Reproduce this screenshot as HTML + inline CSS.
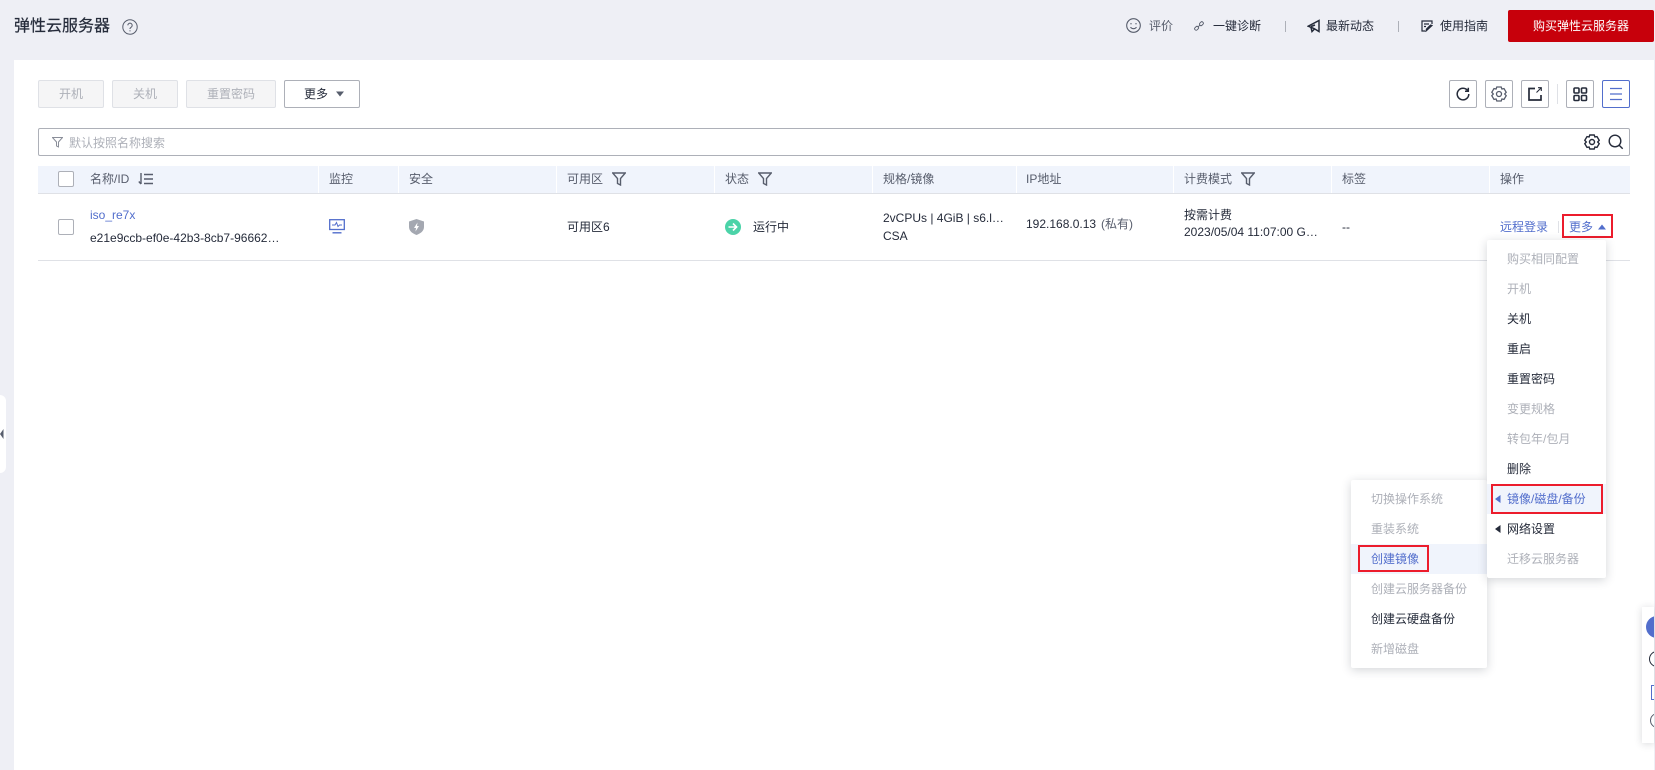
<!DOCTYPE html>
<html lang="zh"><head><meta charset="utf-8"><title>弹性云服务器</title>
<style>
html,body{margin:0;padding:0}
body{width:1655px;height:770px;position:relative;overflow:hidden;background:#eeeff5;font:12px/18px "Liberation Sans","Noto Sans CJK SC",sans-serif;color:#252b3a}
.a,.t,svg{position:absolute}
.t{white-space:nowrap;line-height:18px}
.b{position:absolute;box-sizing:border-box;height:28px;top:80px;border:1px solid #adb0b8;border-radius:2px;background:#fff;text-align:center;line-height:26px}
.d{background:#f5f5f6;border-color:#dfe1e6;color:#adb0b8}
.g{color:#575d6c}
.dis{color:#adb0b8}
.l{color:#526ecc}
.sep{position:absolute;top:166px;width:1px;height:27px;background:#fff}
.menu{position:absolute;background:#fff;border-radius:2px;box-shadow:0 2px 10px rgba(37,43,58,.2)}
.r{position:absolute;box-sizing:border-box;border:2px solid #ec1c2c}
svg{fill:none}
</style></head><body>

<div class="t" style="left:14px;top:15px;font-size:16px;line-height:24px;color:#252b3a;-webkit-text-stroke:.2px #252b3a">弹性云服务器</div>
<svg style="left:122px;top:19px" width="16" height="16" viewBox="0 0 16 16" stroke="#575d6c"><circle cx="8" cy="8" r="7.200"/><path d="M5.800 6.300a2.200 2.200 0 1 1 3.400 1.900C8.400 8.700 8 9.100 8 10"/><path d="M8 11.200v1.200"/></svg>

<svg style="left:1126px;top:18px" width="15" height="15" viewBox="0 0 15 15" stroke="#575d6c" stroke-width="1.100"><circle cx="7.500" cy="7.500" r="6.800"/><path d="M4.500 9.200c1.500 2 4.500 2 6 0"/><path d="M5 5v1.400M10 5v1.400"/></svg>
<div class="t g" style="left:1149px;top:17px">评价</div>
<svg style="left:1194px;top:21px" width="10" height="10" viewBox="0 0 10 10" stroke="#575d6c" stroke-width=".9"><rect x="5.300" y="1.200" width="4.200" height="3" rx="1.400" transform="rotate(-45 7.400 2.700)"/><rect x=".5" y="5.800" width="4.200" height="3" rx="1.400" transform="rotate(-45 2.600 7.300)"/><path d="M3.800 6.200l2.400-2.400"/></svg>
<div class="t" style="left:1213px;top:17px">一键诊断</div>
<div class="a" style="left:1285px;top:21px;width:1px;height:11px;background:#adb0b8"></div>
<svg style="left:1307px;top:19px" width="13" height="14" viewBox="0 0 13 14" stroke="#252b3a" stroke-width="1.500"><path d="M12 1.500v11L7 9.500 1.200 7.200z"/><path d="M4 8.500l1 4 2.500-2.500" /><path d="M8 6L4 7.500" /></svg>
<div class="t" style="left:1326px;top:17px">最新动态</div>
<div class="a" style="left:1398px;top:21px;width:1px;height:11px;background:#adb0b8"></div>
<svg style="left:1421px;top:20px" width="12" height="12" viewBox="0 0 12 12" stroke="#252b3a" stroke-width="1.200"><path d="M11 4V1H1v10h3"/><path d="M3 4h5M3 6.500h2"/><path d="M5 11l6-5.500-1.500-.5L5.500 9z" fill="#252b3a"/></svg>
<div class="t" style="left:1440px;top:17px">使用指南</div>
<div class="a" style="left:1508px;top:10px;width:146px;height:32px;background:#c7000b;border-radius:2px;color:#fff;text-align:center;line-height:32px">购买弹性云服务器</div>

<div class="a" style="left:14px;top:60px;width:1640px;height:710px;background:#fff"></div>
<div class="a" style="left:0;top:395px;width:6px;height:78px;background:#fff;border-radius:0 6px 6px 0"></div>
<svg style="left:0;top:428px" width="4" height="12" viewBox="0 0 4 12"><path d="M3.500 1v10L0 6z" fill="#575d6c"/></svg>

<div class="b d" style="left:38px;width:66px">开机</div>
<div class="b d" style="left:112px;width:66px">关机</div>
<div class="b d" style="left:186px;width:90px">重置密码</div>
<div class="b" style="left:284px;width:76px;text-align:left;padding-left:19px">更多</div>
<svg style="left:336px;top:91px" width="8" height="6"><path d="M0 .5h8L4 5.500z" fill="#575d6c"/></svg>

<div class="b" style="left:1449px;width:28px"></div>
<svg style="left:1455px;top:86px" width="16" height="16" viewBox="0 0 16 16" stroke="#252b3a" stroke-width="1.500"><path d="M12.800 4.800A5.800 5.800 0 1 0 13.800 8"/><path d="M13.300 1.800v3.500H10"/></svg>
<div class="b" style="left:1485px;width:28px"></div>
<svg style="left:1491px;top:86px" width="16" height="16" viewBox="0 0 16 16" stroke="#575d6c" stroke-width="1.300"><path d="M5.800 1h4.400l.7 2 2.100-.4 2.200 3.700-1.500 1.700 1.500 1.700-2.200 3.700-2.100-.4-.7 2H5.800l-.7-2-2.100.4L.8 9.700l1.500-1.700L.8 6.300 3 2.600l2.100.4z"/><circle cx="8" cy="8" r="2.500"/></svg>
<div class="b" style="left:1521px;width:28px"></div>
<svg style="left:1527px;top:86px" width="16" height="16" viewBox="0 0 16 16" stroke="#252b3a" stroke-width="1.700"><path d="M8 2.500H2v11.500h12V9"/><path d="M9.500 6.500L14 2M11 1.700h3.300V5" stroke-width="1.100"/></svg>
<div class="a" style="left:1557px;top:84px;width:1px;height:20px;background:#dfe1e6"></div>
<div class="b" style="left:1566px;width:28px"></div>
<svg style="left:1572px;top:86px" width="16" height="16" viewBox="0 0 16 16" stroke="#252b3a" stroke-width="1.600"><rect x="2" y="2" width="5" height="5" rx="1"/><rect x="9.500" y="2" width="5" height="5" rx="1"/><rect x="2" y="9.500" width="5" height="5" rx="1"/><rect x="9.500" y="9.500" width="5" height="5" rx="1"/></svg>
<div class="b" style="left:1602px;width:28px;border-color:#526ecc"></div>
<svg style="left:1608px;top:86px" width="16" height="16" viewBox="0 0 16 16" stroke="#526ecc" stroke-width="1.300"><path d="M2 2.500h12M2 8h12M2 13.500h12"/></svg>

<div class="a" style="left:38px;top:128px;width:1592px;height:28px;box-sizing:border-box;border:1px solid #adb0b8;border-radius:2px"></div>
<svg style="left:52px;top:137px" width="11" height="11" viewBox="0 0 11 11" stroke="#8a8e99"><path d="M.5.500h10L6.500 5v5l-2-1V5z"/></svg>
<div class="t dis" style="left:69px;top:134px">默认按照名称搜索</div>
<svg style="left:1584px;top:134px" width="16" height="16" viewBox="0 0 16 16" stroke="#252b3a" stroke-width="1.400"><path d="M5.800 1h4.400l.7 2 2.100-.4 2.200 3.700-1.500 1.700 1.500 1.700-2.200 3.700-2.100-.4-.7 2H5.800l-.7-2-2.100.4L.8 9.700l1.500-1.700L.8 6.300 3 2.600l2.100.4z"/><circle cx="8" cy="8" r="2.500"/></svg>
<svg style="left:1608px;top:134px" width="16" height="16" viewBox="0 0 16 16" stroke="#252b3a" stroke-width="1.400"><circle cx="7" cy="7" r="5.800"/><path d="M11.200 11.200l3.500 3.500"/></svg>

<div class="a" style="left:38px;top:166px;width:1592px;height:27px;background:#f0f4fc;border-bottom:1px solid #dfe1e6"></div>
<div class="sep" style="left:318px"></div><div class="sep" style="left:398px"></div><div class="sep" style="left:556px"></div><div class="sep" style="left:714px"></div><div class="sep" style="left:872px"></div><div class="sep" style="left:1016px"></div><div class="sep" style="left:1173px"></div><div class="sep" style="left:1331px"></div><div class="sep" style="left:1489px"></div>

<div class="a" style="left:58px;top:171px;width:16px;height:16px;box-sizing:border-box;border:1px solid #adb0b8;border-radius:2px;background:#fff"></div>
<div class="t g" style="left:90px;top:170px">名称/ID</div>
<svg style="left:138px;top:172px" width="15" height="14" viewBox="0 0 15 14" stroke="#575d6c" stroke-width="1.400"><path d="M3 1v11M.8 9.500L3 12"/><path d="M6 2.500h9M6 7h9M6 11.500h9"/></svg>
<div class="t g" style="left:329px;top:170px">监控</div>
<div class="t g" style="left:409px;top:170px">安全</div>
<div class="t g" style="left:567px;top:170px">可用区</div>
<svg style="left:612px;top:172px" width="14" height="14" viewBox="0 0 14 14" stroke="#575d6c" stroke-width="1.400"><path d="M.7 1h12.600L8.500 6.500V13l-3-1.500v-5z"/></svg>
<div class="t g" style="left:725px;top:170px">状态</div>
<svg style="left:758px;top:172px" width="14" height="14" viewBox="0 0 14 14" stroke="#575d6c" stroke-width="1.400"><path d="M.7 1h12.600L8.500 6.500V13l-3-1.500v-5z"/></svg>
<div class="t g" style="left:883px;top:170px">规格/镜像</div>
<div class="t g" style="left:1026px;top:170px">IP地址</div>
<div class="t g" style="left:1184px;top:170px">计费模式</div>
<svg style="left:1241px;top:172px" width="14" height="14" viewBox="0 0 14 14" stroke="#575d6c" stroke-width="1.400"><path d="M.7 1h12.600L8.500 6.500V13l-3-1.500v-5z"/></svg>
<div class="t g" style="left:1342px;top:170px">标签</div>
<div class="t g" style="left:1500px;top:170px">操作</div>

<div class="a" style="left:58px;top:219px;width:16px;height:16px;box-sizing:border-box;border:1px solid #adb0b8;border-radius:2px"></div>
<div class="t l" style="left:90px;top:206px">iso_re7x</div>
<div class="t" style="left:90px;top:229px">e21e9ccb-ef0e-42b3-8cb7-96662…</div>
<svg style="left:329px;top:219px" width="16" height="15" viewBox="0 0 16 15" stroke="#526ecc" stroke-width="1.300"><rect x=".7" y=".7" width="14.600" height="9.800"/><path d="M3 6h3l1.500-2.500L9 7.500 10.500 6H13" stroke-width="1"/><path d="M3.500 13.800h9" stroke-width="1.400"/></svg>
<svg style="left:409px;top:219px" width="15" height="16" viewBox="0 0 15 16"><path d="M7.500 0L15 2.500V8c0 4-3.500 6.500-7.500 8C3.500 14.500 0 12 0 8V2.500z" fill="#a4a8b1"/><path d="M8.500 3.500L5 9h2l-.5 3.500L10 7H8z" fill="#fff"/></svg>
<div class="t" style="left:567px;top:218px">可用区6</div>
<svg style="left:725px;top:219px" width="16" height="16" viewBox="0 0 16 16"><circle cx="8" cy="8" r="8" fill="#4bd3a8"/><path d="M3.500 8h8M8 4.500L11.500 8 8 11.500" stroke="#fff" stroke-width="1.600"/></svg>
<div class="t" style="left:753px;top:218px">运行中</div>
<div class="t" style="left:883px;top:209px">2vCPUs | 4GiB | s6.l…</div>
<div class="t" style="left:883px;top:227px">CSA</div>
<div class="t" style="left:1026px;top:215px">192.168.0.13</div>
<div class="t g" style="left:1101px;top:215px">(私有)</div>
<div class="t" style="left:1184px;top:206px">按需计费</div>
<div class="t" style="left:1184px;top:223px">2023/05/04 11:07:00 G…</div>
<div class="t" style="left:1342px;top:218px">--</div>
<div class="t l" style="left:1500px;top:218px">远程登录</div>
<div class="a" style="left:1558px;top:221px;width:1px;height:12px;background:#dfe1e6"></div>
<div class="t l" style="left:1569px;top:218px">更多</div>
<svg style="left:1598px;top:224px" width="8" height="6"><path d="M4 .5L8 5.500H0z" fill="#526ecc"/></svg>
<div class="r" style="left:1562px;top:214px;width:51px;height:24px"></div>
<div class="a" style="left:38px;top:260px;width:1592px;height:1px;background:#dfe1e6"></div>

<div class="a" style="left:1642px;top:607px;width:12px;height:136px;background:#fff;box-shadow:0 1px 8px rgba(37,43,58,.18);overflow:hidden">
<div class="a" style="left:4px;top:9px;width:22px;height:22px;border-radius:50%;background:#526ecc"></div>
<div class="a" style="left:7px;top:44px;width:14px;height:14px;border:1px solid #252b3a;border-radius:50%"></div>
<div class="a" style="left:9px;top:78px;width:12px;height:13px;border:1px solid #526ecc"></div>
<div class="a" style="left:8px;top:106px;width:13px;height:13px;border:1px solid #575d6c;border-radius:50%"></div>
</div>

<div class="menu" style="left:1351px;top:480px;width:136px;height:188px"></div>
<div class="a" style="left:1351px;top:544px;width:136px;height:30px;background:#f0f4fc"></div>
<div class="t dis" style="left:1371px;top:490px">切换操作系统</div>
<div class="t dis" style="left:1371px;top:520px">重装系统</div>
<div class="t l" style="left:1371px;top:550px">创建镜像</div>
<div class="t dis" style="left:1371px;top:580px">创建云服务器备份</div>
<div class="t" style="left:1371px;top:610px">创建云硬盘备份</div>
<div class="t dis" style="left:1371px;top:640px">新增磁盘</div>
<div class="r" style="left:1358px;top:545px;width:71px;height:27px"></div>

<div class="menu" style="left:1487px;top:240px;width:119px;height:338px"></div>
<div class="a" style="left:1487px;top:484px;width:119px;height:30px;background:#f0f4fc"></div>
<div class="t dis" style="left:1507px;top:250px">购买相同配置</div>
<div class="t dis" style="left:1507px;top:280px">开机</div>
<div class="t" style="left:1507px;top:310px">关机</div>
<div class="t" style="left:1507px;top:340px">重启</div>
<div class="t" style="left:1507px;top:370px">重置密码</div>
<div class="t dis" style="left:1507px;top:400px">变更规格</div>
<div class="t dis" style="left:1507px;top:430px">转包年/包月</div>
<div class="t" style="left:1507px;top:460px">删除</div>
<svg style="left:1495px;top:495px" width="6" height="8"><path d="M5.500 0v8L0 4z" fill="#526ecc"/></svg>
<div class="t l" style="left:1507px;top:490px">镜像/磁盘/备份</div>
<svg style="left:1495px;top:525px" width="6" height="8"><path d="M5.500 0v8L0 4z" fill="#252b3a"/></svg>
<div class="t" style="left:1507px;top:520px">网络设置</div>
<div class="t dis" style="left:1507px;top:550px">迁移云服务器</div>
<div class="r" style="left:1491px;top:484px;width:112px;height:30px"></div>

</body></html>
